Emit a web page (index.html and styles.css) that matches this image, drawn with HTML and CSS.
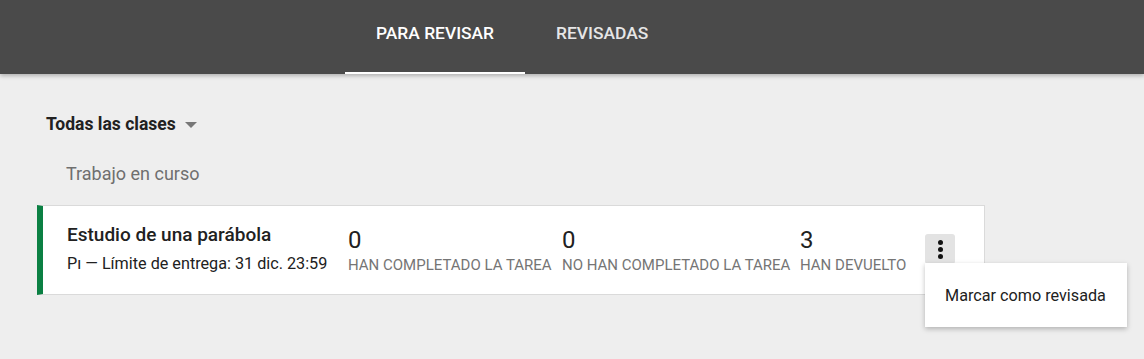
FILE: index.html
```html
<!DOCTYPE html>
<html lang="es">
<head>
<meta charset="utf-8">
<link rel="stylesheet" href="styles.css">
</head>
<body>
<header class="topbar">
  <nav class="tabs">
    <a class="tab active">PARA REVISAR</a>
    <a class="tab">REVISADAS</a>
  </nav>
</header>
<main class="content">
  <div class="filter">
    <span class="filter-label">Todas las clases</span>
    <span class="caret"></span>
  </div>
  <h2 class="section">Trabajo en curso</h2>
  <div class="card">
    <div class="info">
      <div class="title">Estudio de una parábola</div>
      <div class="sub">Pı — Límite de entrega: 31 dic. 23:59</div>
    </div>
    <div class="stat s1"><div class="num">0</div><div class="lbl">HAN COMPLETADO LA TAREA</div></div>
    <div class="stat s2"><div class="num">0</div><div class="lbl">NO HAN COMPLETADO LA TAREA</div></div>
    <div class="stat s3"><div class="num">3</div><div class="lbl">HAN DEVUELTO</div></div>
    <div class="kebab-wrap">
      <button class="kebab"><span></span><span></span><span></span></button>
      <div class="menu"><div class="menu-item">Marcar como revisada</div></div>
    </div>
  </div>
</main>
</body>
</html>
```
FILE: styles.css
```css
* { box-sizing: border-box; }
html, body { margin: 0; padding: 0; }
body {
  background: #eeeeee;
  font-family: Roboto, "Liberation Sans", Arial, sans-serif;
  color: #212121;
  width: 1144px;
  height: 359px;
  overflow: hidden;
}
.topbar {
  background: #4a4a4a;
  height: 74px;
  box-shadow: 0 2px 4px rgba(0,0,0,0.25);
  padding-left: 345px;
  position: relative;
  z-index: 1;
}
.tabs { display: flex; height: 74px; }
.tab {
  display: flex;
  align-items: center;
  padding: 0 31px 6px;
  font-size: 17.4px;
  font-weight: 500;
  color: #e6e6e6;
  border-bottom: 2px solid transparent;
  height: 74px;
}
.tab.active { color: #ffffff; border-bottom-color: #ffffff; }
.content { padding: 38px 0 0 37px; }
.filter {
  display: flex;
  align-items: center;
  padding-left: 9px;
  height: 24px;
}
.filter-label { font-size: 17.5px; font-weight: 700; color: #212121; }
.caret {
  width: 0; height: 0;
  border-left: 6px solid transparent;
  border-right: 6px solid transparent;
  border-top: 6px solid #777;
  margin-left: 9px;
  margin-top: 1px;
}
.section {
  margin: 26px 0 0 29px;
  font-size: 18px;
  font-weight: 400;
  color: #6f6f6f;
  height: 24px;
  line-height: 24px;
}
.card {
  margin-top: 19px;
  width: 948px;
  height: 90px;
  background: #fff;
  border: 1px solid #dadada;
  border-left: 6px solid #0b8043;
  display: flex;
  align-items: flex-start;
  padding-left: 24px;
  position: relative;
}
.info { width: 281px; padding-top: 17px; }
.title { font-size: 19px; font-weight: 500; color: #212121; line-height: 24px; }
.sub { font-size: 16.2px; color: #212121; margin-top: 7px; line-height: 20px; }
.stat { padding-top: 20px; }
.s1 { width: 214px; }
.s2 { width: 238px; }
.s3 { width: 125px; }
.num { font-size: 24px; color: #212121; line-height: 28px; }
.lbl { font-size: 15px; color: #757575; line-height: 18px; margin-top: 2px; }
.kebab-wrap { position: relative; padding-top: 28px; }
.kebab {
  width: 30px; height: 30px;
  background: #e3e3e3;
  border: none;
  border-radius: 3px;
  display: flex;
  flex-direction: column;
  align-items: center;
  justify-content: center;
  gap: 2px;
  padding: 0;
}
.kebab span { width: 5px; height: 5px; border-radius: 50%; background: #111; display: block; }
.menu {
  position: absolute;
  left: 0;
  top: 57px;
  width: 202px;
  height: 64px;
  background: #fff;
  box-shadow: 0 2px 5px rgba(0,0,0,0.25);
  display: flex;
  align-items: center;
  padding-left: 20px;
  z-index: 2;
}
.menu-item { font-size: 16.2px; color: #212121; }
```
